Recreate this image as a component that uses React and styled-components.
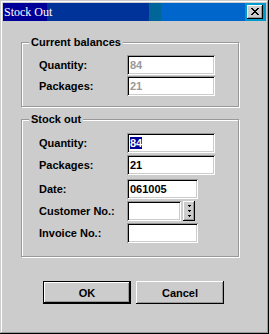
import React from "react";
import styled, { createGlobalStyle } from "styled-components";

const GlobalStyle = createGlobalStyle`
  body {
    margin: 0;
    background: #ffffff;
    font-family: "Liberation Sans", Arial, sans-serif;
  }
`;

const Window = styled.div`
  width: 269px;
  height: 334px;
  box-sizing: border-box;
  padding: 3px;
  background: #cccccc;
  box-shadow: inset -1px -1px 0 #000000, inset 1px 1px 0 #cccccc,
    inset -2px -2px 0 #999999, inset 2px 2px 0 #ffffff;
  display: flex;
  flex-direction: column;
`;

const TitleBar = styled.div`
  height: 18px;
  display: flex;
  align-items: center;
  justify-content: space-between;
  background: linear-gradient(
    to right,
    #000099 0 44px,
    #003399 44px 146px,
    #006699 146px 158px,
    #0066cc 158px 242px,
    #0099cc 242px
  );
`;

const Title = styled.span`
  padding-left: 1px;
  color: #ffffff;
  font-family: "Liberation Serif", "Times New Roman", serif;
  font-size: 12px;
  line-height: 18px;
`;

const CloseButton = styled.div`
  width: 16px;
  height: 14px;
  margin-right: 3px;
  box-sizing: border-box;
  background: #cccccc;
  box-shadow: inset -1px -1px 0 #000000, inset 1px 1px 0 #ffffff,
    inset -2px -2px 0 #999999;
  display: flex;
  align-items: center;
  justify-content: center;
  padding: 0 1px 1px 0;
`;

const Body = styled.div`
  padding: 15px 0 0 18px;
  display: flex;
  flex-direction: column;
`;

const Group = styled.fieldset`
  width: 218px;
  box-sizing: border-box;
  margin: 0 0 ${(p) => p.$after}px 0;
  padding: ${(p) => p.$padTop}px 0 ${(p) => p.$padBottom}px 0;
  min-inline-size: 0;
  border: 1px solid #999999;
  box-shadow: inset 1px 1px 0 #ffffff, 1px 1px 0 #ffffff;
`;

const Legend = styled.legend`
  margin-left: 7px;
  padding: 0 2px;
  background: #cccccc;
  font-size: 11px;
  font-weight: bold;
  line-height: 13px;
  color: #000000;
`;

const Fields = styled.div`
  display: grid;
  grid-template-columns: 88px auto;
  row-gap: ${(p) => p.$gap}px;
  align-items: center;
  padding-left: 17px;
`;

const Label = styled.div`
  font-size: 11px;
  font-weight: bold;
  color: #000000;
  margin-top: ${(p) => p.$shift || 0}px;
`;

const Cell = styled.div`
  display: flex;
  gap: 2px;
  margin-top: ${(p) => p.$shift || 0}px;
`;

const TextBox = styled.div`
  width: ${(p) => p.$w}px;
  height: 20px;
  box-sizing: border-box;
  padding: 3px 0 0 3px;
  background: #ffffff;
  box-shadow: inset 1px 1px 0 #999999, inset -1px -1px 0 #ffffff,
    inset 2px 2px 0 #000000, inset -2px -2px 0 #cccccc;
  font-size: 11px;
  font-weight: bold;
  line-height: 14px;
  color: ${(p) => (p.$disabled ? "#999999" : "#000000")};
`;

const Selected = styled.span`
  background: #000099;
  color: #ffffff;
`;

const SpinButton = styled.div`
  width: 12px;
  height: 20px;
  box-sizing: border-box;
  background: #cccccc;
  box-shadow: inset -1px -1px 0 #000000, inset 1px 1px 0 #ffffff,
    inset -2px -2px 0 #999999;
  display: flex;
  align-items: center;
  justify-content: center;
`;

const Buttons = styled.div`
  display: flex;
  gap: 5px;
  padding-left: 22px;
  margin-top: 24px;
`;

const PushButton = styled.div`
  width: 88px;
  height: 23px;
  box-sizing: border-box;
  background: #cccccc;
  border: ${(p) => (p.$default ? "1px solid #000000" : "none")};
  box-shadow: inset -1px -1px 0 #000000, inset 1px 1px 0 #ffffff,
    inset -2px -2px 0 #999999;
  display: flex;
  align-items: center;
  justify-content: center;
  font-size: 11px;
  font-weight: bold;
  color: #000000;
`;

function CloseGlyph() {
  const rows = ["11000011", "01100110", "00111100", "00011000", "00111100", "01100110", "11000011"];
  return (
    <svg width="8" height="7" viewBox="0 0 8 7" shapeRendering="crispEdges">
      {rows.flatMap((row, y) =>
        row.split("").map((c, x) => (c === "1" ? <rect key={`${x}-${y}`} x={x} y={y} width="1" height="1" fill="#000" /> : null))
      )}
    </svg>
  );
}

function SpinGlyph() {
  return (
    <svg width="5" height="14" viewBox="0 0 5 14" shapeRendering="crispEdges">
      <path d="M1 1h3v1H1zM2 2h1v1H2z" fill="#000" />
      <path d="M1 6h3v1H1zM2 7h1v1H2z" fill="#000" />
      <path d="M1 11h3v1H1zM2 12h1v1H2z" fill="#000" />
    </svg>
  );
}

export default function App() {
  return (
    <>
      <GlobalStyle />
      <Window>
        <TitleBar>
          <Title>Stock Out</Title>
          <CloseButton>
            <CloseGlyph />
          </CloseButton>
        </TitleBar>
        <Body>
          <Group $padTop={6} $padBottom={10} $after={6}>
            <Legend>Current balances</Legend>
            <Fields $gap={1}>
              <Label>Quantity:</Label>
              <Cell>
                <TextBox $w={88} $disabled>84</TextBox>
              </Cell>
              <Label>Packages:</Label>
              <Cell>
                <TextBox $w={88} $disabled>21</TextBox>
              </Cell>
            </Fields>
          </Group>
          <Group $padTop={7} $padBottom={13} $after={0}>
            <Legend>Stock out</Legend>
            <Fields $gap={2}>
              <Label>Quantity:</Label>
              <Cell>
                <TextBox $w={88}>
                  <Selected>84</Selected>
                </TextBox>
              </Cell>
              <Label>Packages:</Label>
              <Cell>
                <TextBox $w={88}>21</TextBox>
              </Cell>
              <Label $shift={2}>Date:</Label>
              <Cell $shift={2}>
                <TextBox $w={71}>061005</TextBox>
              </Cell>
              <Label>Customer No.:</Label>
              <Cell>
                <TextBox $w={54} />
                <SpinButton>
                  <SpinGlyph />
                </SpinButton>
              </Cell>
              <Label>Invoice No.:</Label>
              <Cell>
                <TextBox $w={71} />
              </Cell>
            </Fields>
          </Group>
          <Buttons>
            <PushButton $default>OK</PushButton>
            <PushButton>Cancel</PushButton>
          </Buttons>
        </Body>
      </Window>
    </>
  );
}
